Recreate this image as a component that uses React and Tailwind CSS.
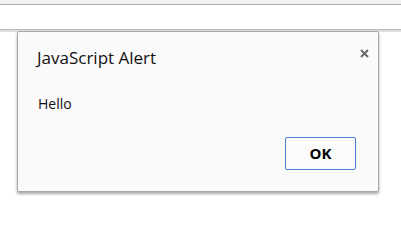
export default function App() {
  return (
    <div
      className="relative w-[401px] h-[226px] overflow-hidden bg-white"
      style={{ fontFamily: '"Open Sans", "Noto Sans", sans-serif' }}
    >
      <div className="h-[4px] bg-[#f2f2f2]" />
      <div className="h-[1px] bg-[#a6a6a6]" />
      <div className="h-[24px] bg-white" />
      <div className="h-[1px] bg-[#b9b9b9]" />
      <div className="h-[2px] bg-[#dedede]" />

      <div className="absolute left-[17px] top-[31px] w-[362px] h-[161px] bg-[#fafafa] border border-[#a9a9a9] rounded-[2px] shadow-[0_2px_3px_rgba(0,0,0,0.35)] flex flex-col">
        <div className="flex items-start justify-between pl-[19px] pr-[9px] pt-[14px]">
          <div className="text-[17px] leading-[24px] text-[#111]">JavaScript Alert</div>
          <svg width="9" height="9" viewBox="0 0 9 9" className="mt-[3px]">
            <path d="M1 1 L8 8 M8 1 L1 8" stroke="#6b6b6b" strokeWidth="2" />
          </svg>
        </div>
        <div className="pl-[20px] pt-[25px] text-[14px] leading-[18px] text-[#111]">Hello</div>
        <div className="flex justify-end pr-[22px] pt-[24px]">
          <button className="w-[71px] h-[33px] border border-[#4d80d6] rounded-[2px] bg-[#fbfbfb] text-[15px] font-bold text-black">
            OK
          </button>
        </div>
      </div>
    </div>
  );
}
